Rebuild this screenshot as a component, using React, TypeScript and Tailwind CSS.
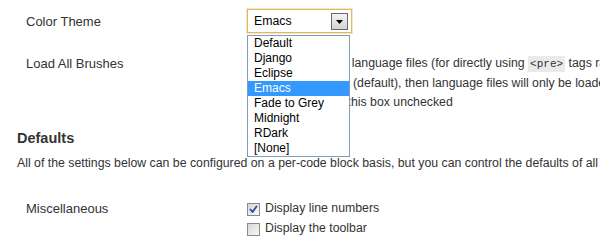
import React from "react";

const themes = ["Default", "Django", "Eclipse", "Emacs", "Fade to Grey", "Midnight", "RDark", "[None]"];

function Checkbox({ checked }: { checked?: boolean }) {
  return (
    <span className="relative inline-block w-[13px] h-[13px] shrink-0 border border-[#8a8a8a] bg-gradient-to-br from-[#d6d6d6] to-[#fbfbfb]">
      {checked && (
        <svg viewBox="0 0 11 11" className="absolute left-0 top-0 w-[11px] h-[11px]">
          <path d="M2.5 5.5 L4.5 8 L8.5 2.5" fill="none" stroke="#2b4a9c" strokeWidth="1.8" strokeLinecap="round" strokeLinejoin="round" />
        </svg>
      )}
    </span>
  );
}

export default function App() {
  return (
    <div
      className="relative w-[600px] h-[244px] overflow-hidden bg-white text-[13px] text-[#333]"
      style={{ fontFamily: '"Liberation Sans", Arial, sans-serif' }}
    >
      <div className="pl-[17px]">
        {/* Row: Color Theme */}
        <div className="flex pt-[9px]">
          <div className="w-[230px] pl-[9px] leading-[24px] pt-[1px] shrink-0">Color Theme</div>
          <div className="relative w-[105px] h-[24px] border border-[#e2b865] shadow-[0_0_0_1px_#f6e6c4] bg-white flex items-center text-[12.3px] text-[#000]">
            <span className="pl-[6px] pt-[1px] leading-[15px]">Emacs</span>
            <span className="absolute right-[3px] top-[3px] w-[17px] h-[17px] border border-[#6a6a6a] bg-gradient-to-b from-[#f4f4f4] to-[#d4d4d4] flex items-center justify-center">
              <svg viewBox="0 0 7 4" className="w-[7px] h-[4px]">
                <path d="M0 0 L7 0 L3.5 4 Z" fill="#000" />
              </svg>
            </span>
          </div>
        </div>

        {/* Row: Load All Brushes */}
        <div className="flex mt-[20px]">
          <div className="w-[230px] pl-[9px] leading-[20px] shrink-0">Load All Brushes</div>
          <div className="leading-[19.5px] whitespace-nowrap text-[12.3px]">
            <div className="flex items-center gap-[7px] h-[19.5px] overflow-visible">
              <Checkbox />
              <span className="leading-[19.5px]">
                Always load all language files (for directly using{" "}
                <code
                  className="bg-[#eaeaea] px-[2px] py-[2px] text-[11px] leading-[12px] text-[#333]"
                  style={{ fontFamily: '"Liberation Mono", "DejaVu Sans Mono", monospace' }}
                >
                  &lt;pre&gt;
                </code>{" "}
                tags rather than shortcodes)
              </span>
            </div>
            <div className="pl-[13px] h-[19.5px]">If left unchecked (default), then language files will only be loaded when needed</div>
            <div className="pl-[13px] h-[19.5px]">If unsure, leave this box unchecked</div>
          </div>
        </div>

        {/* Heading */}
        <h3 className="mt-[15px] text-[14.5px] font-bold leading-[20px] text-[#333]">Defaults</h3>
        <p className="mt-[5px] leading-[20px] whitespace-nowrap text-[12.3px]">
          All of the settings below can be configured on a per-code block basis, but you can control the defaults of all of them here.
        </p>

        {/* Row: Miscellaneous */}
        <div className="flex mt-[25px]">
          <div className="w-[230px] pl-[9px] leading-[20px] pt-[1px] shrink-0">Miscellaneous</div>
          <div className="leading-[20px] whitespace-nowrap text-[12.3px]">
            <div className="flex items-start gap-[5px] h-[20.5px]">
              <span className="mt-[5px] flex"><Checkbox checked /></span>
              <span>Display line numbers</span>
            </div>
            <div className="flex items-start gap-[5px] h-[20.5px]">
              <span className="mt-[5px] flex"><Checkbox /></span>
              <span>Display the toolbar</span>
            </div>
            <div className="flex items-start gap-[5px] h-[20.5px]">
              <span className="mt-[5px] flex"><Checkbox /></span>
              <span>Automatically make URLs clickable</span>
            </div>
          </div>
        </div>
      </div>

      {/* Open dropdown list */}
      <ul className="absolute left-[247px] top-[35px] w-[103px] border border-[#7f9db9] bg-white text-[12px]">
        {themes.map((t) => (
          <li
            key={t}
            className={
              t === "Emacs"
                ? "h-[15px] leading-[15px] pl-[6px] bg-[#3399ff] text-white"
                : "h-[15px] leading-[15px] pl-[6px] text-[#000]"
            }
          >
            {t}
          </li>
        ))}
      </ul>
    </div>
  );
}
